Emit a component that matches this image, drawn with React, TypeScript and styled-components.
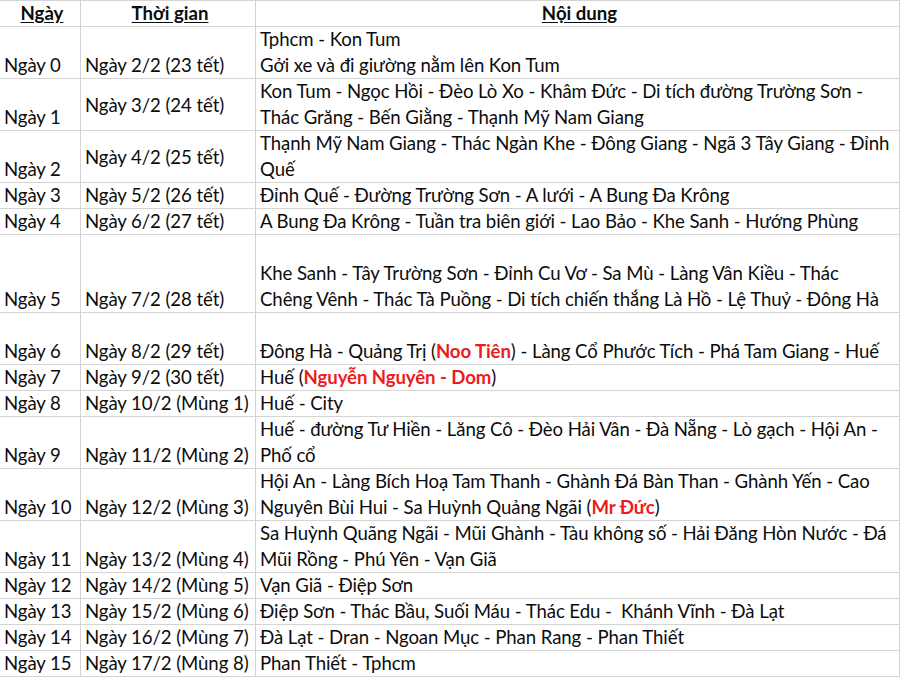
import React from 'react';
import styled, { createGlobalStyle } from 'styled-components';

const GlobalStyle = createGlobalStyle`
  html, body {
    margin: 0;
    padding: 0;
    background: #ffffff;
  }
  body {
    font-family: Lato, "Liberation Sans", sans-serif;
    color: #0c0c0c;
  }
`;

type Seg = string | { red: string };
type Row = {
  day: string;
  date: string;
  height: number;
  dateMiddle?: boolean;
  lines: Seg[][];
};

const rows: Row[] = [
  { day: 'Ngày 0', date: 'Ngày 2/2 (23 tết)', height: 52, lines: [['Tphcm - Kon Tum'], ['Gởi xe và đi giường nằm lên Kon Tum']] },
  {
    day: 'Ngày 1', date: 'Ngày 3/2 (24 tết)', height: 52, dateMiddle: true,
    lines: [['Kon Tum - Ngọc Hồi - Đèo Lò Xo - Khâm Đức - Di tích đường Trường Sơn -'], ['Thác Grăng - Bến Giằng - Thạnh Mỹ Nam Giang']],
  },
  {
    day: 'Ngày 2', date: 'Ngày 4/2 (25 tết)', height: 52, dateMiddle: true,
    lines: [['Thạnh Mỹ Nam Giang - Thác Ngàn Khe - Đông Giang - Ngã 3 Tây Giang - Đỉnh'], ['Quế']],
  },
  { day: 'Ngày 3', date: 'Ngày 5/2 (26 tết)', height: 26, lines: [['Đỉnh Quế - Đường Trường Sơn - A lưới - A Bung Đa Krông']] },
  { day: 'Ngày 4', date: 'Ngày 6/2 (27 tết)', height: 26, lines: [['A Bung Đa Krông - Tuần tra biên giới - Lao Bảo - Khe Sanh - Hướng Phùng']] },
  {
    day: 'Ngày 5', date: 'Ngày 7/2 (28 tết)', height: 78,
    lines: [['Khe Sanh - Tây Trường Sơn - Đỉnh Cu Vơ - Sa Mù - Làng Vân Kiều - Thác'], ['Chêng Vênh - Thác Tà Puồng - Di tích chiến thắng Là Hồ - Lệ Thuỷ - Đông Hà']],
  },
  {
    day: 'Ngày 6', date: 'Ngày 8/2 (29 tết)', height: 52,
    lines: [['Đông Hà - Quảng Trị (', { red: 'Noo Tiên' }, ') - Làng Cổ Phước Tích - Phá Tam Giang - Huế']],
  },
  { day: 'Ngày 7', date: 'Ngày 9/2 (30 tết)', height: 26, lines: [['Huế (', { red: 'Nguyễn Nguyên - Dom' }, ')']] },
  { day: 'Ngày 8', date: 'Ngày 10/2 (Mùng 1)', height: 26, lines: [['Huế - City']] },
  {
    day: 'Ngày 9', date: 'Ngày 11/2 (Mùng 2)', height: 52,
    lines: [['Huế - đường Tư Hiền - Lăng Cô - Đèo Hải Vân - Đà Nẵng - Lò gạch - Hội An -'], ['Phố cổ']],
  },
  {
    day: 'Ngày 10', date: 'Ngày 12/2 (Mùng 3)', height: 52,
    lines: [['Hội An - Làng Bích Hoạ Tam Thanh - Ghành Đá Bàn Than - Ghành Yến - Cao'], ['Nguyên Bùi Hui - Sa Huỳnh Quảng Ngãi (', { red: 'Mr Đức' }, ')']],
  },
  {
    day: 'Ngày 11', date: 'Ngày 13/2 (Mùng 4)', height: 52,
    lines: [['Sa Huỳnh Quãng Ngãi - Mũi Ghành - Tàu không số - Hải Đăng Hòn Nước - Đá'], ['Mũi Rồng - Phú Yên - Vạn Giã']],
  },
  { day: 'Ngày 12', date: 'Ngày 14/2 (Mùng 5)', height: 26, lines: [['Vạn Giã - Điệp Sơn']] },
  { day: 'Ngày 13', date: 'Ngày 15/2 (Mùng 6)', height: 26, lines: [['Điệp Sơn - Thác Bầu, Suối Máu - Thác Edu -  Khánh Vĩnh - Đà Lạt']] },
  { day: 'Ngày 14', date: 'Ngày 16/2 (Mùng 7)', height: 26, lines: [['Đà Lạt - Dran - Ngoan Mục - Phan Rang - Phan Thiết']] },
  { day: 'Ngày 15', date: 'Ngày 17/2 (Mùng 8)', height: 26, lines: [['Phan Thiết - Tphcm']] },
];

const Sheet = styled.div`
  display: grid;
  grid-template-columns: 81px 175px 644px;
  width: 900px;
  border-top: 1px solid #d4d4d4;
`;

const Cell = styled.div<{ $h: number; $middle?: boolean; $head?: boolean }>`
  box-sizing: border-box;
  height: ${(p) => p.$h}px;
  border-right: 1px solid #d4d4d4;
  border-bottom: 1px solid #d4d4d4;
  display: flex;
  flex-direction: column;
  justify-content: ${(p) => (p.$middle ? 'center' : 'flex-end')};
  align-items: ${(p) => (p.$head ? 'center' : 'flex-start')};
  padding: 0 0 0 4px;
  font-size: 18.6px;
  letter-spacing: -0.08px;
  line-height: 26px;
  white-space: nowrap;
`;

const HeadText = styled.span`
  font-weight: 700;
  letter-spacing: 0;
  text-decoration: underline;
  text-underline-offset: 2px;
  margin-top: -1px;
`;

const Line = styled.div`
  height: 26px;
  white-space: pre;
`;

const Red = styled.span`
  color: #ec1c1c;
  font-weight: 700;
`;

export default function App() {
  return (
    <>
      <GlobalStyle />
      <Sheet>
        <Cell $h={26} $head>
          <HeadText>Ngày</HeadText>
        </Cell>
        <Cell $h={26} $head>
          <HeadText>Thời gian</HeadText>
        </Cell>
        <Cell $h={26} $head>
          <HeadText>Nội dung</HeadText>
        </Cell>
        {rows.map((r) => (
          <React.Fragment key={r.day}>
            <Cell $h={r.height}>
              <Line>{r.day}</Line>
            </Cell>
            <Cell $h={r.height} $middle={r.dateMiddle}>
              <Line>{r.date}</Line>
            </Cell>
            <Cell $h={r.height}>
              {r.lines.map((segs, i) => (
                <Line key={i}>
                  {segs.map((s, j) =>
                    typeof s === 'string' ? s : <Red key={j}>{s.red}</Red>
                  )}
                </Line>
              ))}
            </Cell>
          </React.Fragment>
        ))}
      </Sheet>
    </>
  );
}
